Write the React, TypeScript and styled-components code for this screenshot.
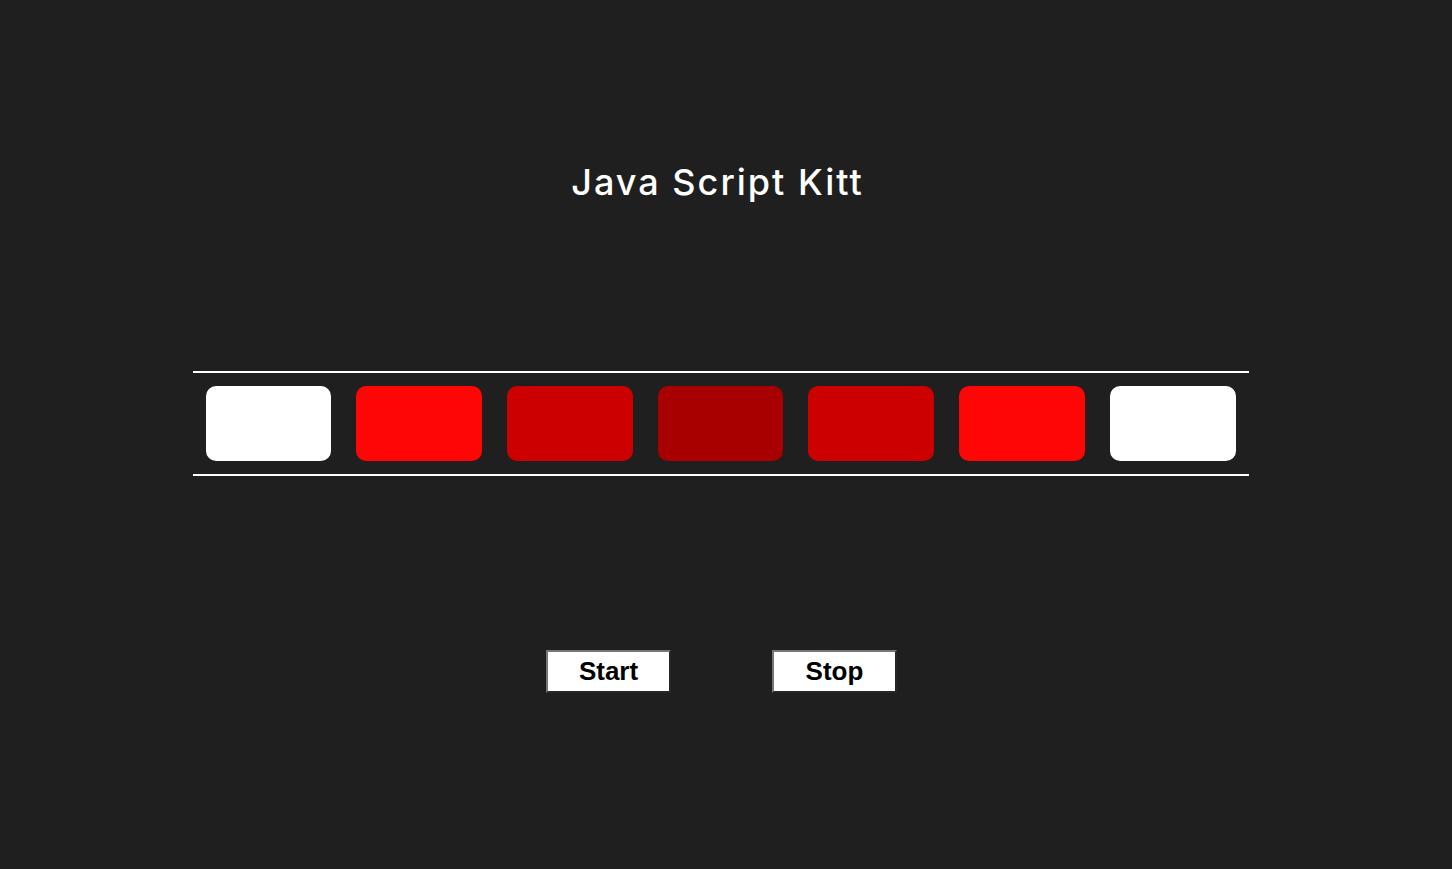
import React from "react";
import styled, { createGlobalStyle } from "styled-components";

const GlobalStyle = createGlobalStyle`
  body {
    margin: 0;
    background: #1f1f1f;
  }
`;

const Page = styled.div`
  width: 1441px;
  display: flex;
  flex-direction: column;
  align-items: center;
`;

const Title = styled.h1`
  margin: 160px 0 0;
  padding-right: 6px;
  font-family: "Inter", "Open Sans", sans-serif;
  font-weight: 500;
  font-size: 36px;
  line-height: 44px;
  letter-spacing: 2px;
  color: #ffffff;
`;

const Strip = styled.div`
  margin-top: 167px;
  width: 1056px;
  box-sizing: border-box;
  padding: 13px 13px;
  border-top: 2px solid #ffffff;
  border-bottom: 2px solid #ffffff;
  display: flex;
  gap: 25px;
`;

const Light = styled.div<{ $color: string }>`
  flex: 1;
  height: 75px;
  border-radius: 10px;
  background: ${(p) => p.$color};
`;

const Controls = styled.div`
  margin-top: 174px;
  padding-left: 2px;
  display: flex;
  gap: 101px;
`;

const Button = styled.button`
  width: 125px;
  height: 43px;
  padding: 0;
  background: #ffffff;
  border-style: solid;
  border-width: 2px;
  border-color: #767676 #262626 #262626 #767676;
  font-family: "Liberation Sans", Arial, sans-serif;
  font-weight: 700;
  font-size: 26px;
  color: #000000;
  cursor: pointer;
`;

const lights = ["#ffffff", "#ff0606", "#cd0000", "#a80000", "#cd0000", "#ff0606", "#ffffff"];

export default function App(): JSX.Element {
  return (
    <>
      <GlobalStyle />
      <Page>
        <Title>Java Script Kitt</Title>
        <Strip>
          {lights.map((c, i) => (
            <Light key={i} $color={c} />
          ))}
        </Strip>
        <Controls>
          <Button>Start</Button>
          <Button>Stop</Button>
        </Controls>
      </Page>
    </>
  );
}
